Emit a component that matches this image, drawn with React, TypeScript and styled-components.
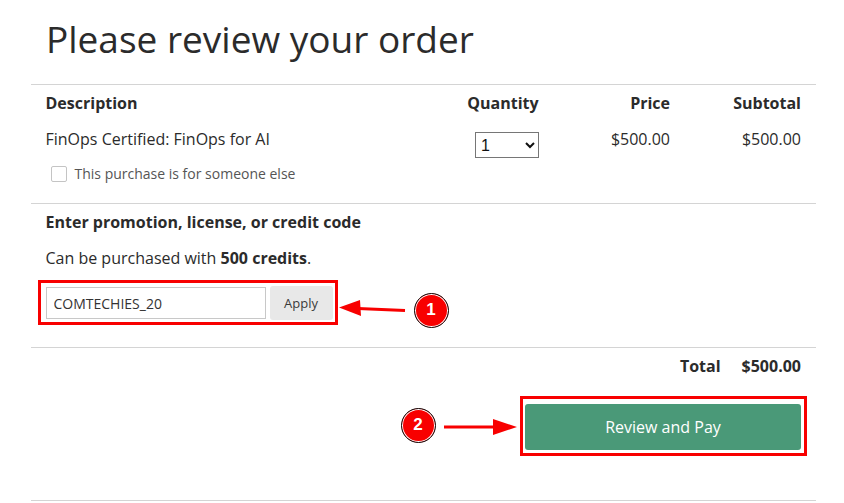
import styled, {createGlobalStyle} from "styled-components";

const GlobalStyle = createGlobalStyle`
  html, body {
    margin: 0;
    padding: 0;
    background: #fff;
  }
  body {
    font-family: "Open Sans", "Liberation Sans", sans-serif;
    color: #2b2b2b;
    overflow: hidden;
  }
`

const Page = styled.div`
  position: relative;
  width: 844px;
  height: 503px;
  padding: 0 28px 0 31px;
  box-sizing: border-box;
  overflow: hidden;
`

const Title = styled.h1`
  margin: 0;
  padding: 15px 0 0 15px;
  height: 84px;
  box-sizing: border-box;
  font-size: 37px;
  line-height: 48px;
  font-weight: 400;
  color: #2b2b2b;
`

const Section = styled.section<{ height: number }>`
  height: ${props => props.height}px;
  box-sizing: border-box;
  border-top: 1px solid #d4d4d4;
  padding: 0 15px 0 14.5px;
`

const GridRow = styled.div`
  display: grid;
  grid-template-columns: 400.5px 114px 1fr 131px;
  font-size: 16px;
`

const HeadRow = styled(GridRow)`
  padding-top: 6px;
  height: 35px;
  line-height: 24px;
  font-weight: 700;
`

const Cell = styled.div<{ align?: string }>`
  text-align: ${props => props.align || "left"};
`

const ItemCell = styled(Cell)`
  line-height: 24px;
  padding-top: 1px;
`

const QtySelect = styled.select`
  display: block;
  margin: 6px 0 0 29px;
  width: 64px;
  height: 26px;
  padding: 0 0 0 1px;
  border: 1px solid #767676;
  border-radius: 0;
  background-color: #fff;
  font-family: "Liberation Sans", sans-serif;
  font-size: 16px;
  color: #111;
`

const CheckLine = styled.label`
  display: flex;
  align-items: center;
  gap: 7.5px;
  margin: 12px 0 0 5.5px;
  font-size: 14px;
  line-height: 22px;
  color: #555;
`

const CheckBox = styled.span`
  width: 16px;
  height: 16px;
  box-sizing: border-box;
  border: 1px solid #c4c4c4;
  border-radius: 2px;
  background: #fff;
`

const CodeHeading = styled.div`
  padding-top: 6px;
  font-size: 16px;
  line-height: 24px;
  font-weight: 700;
`

const CreditNote = styled.p`
  margin: 12px 0 0;
  font-size: 16px;
  line-height: 24px;

  strong {
    font-weight: 700;
  }
`

const CodeForm = styled.div`
  display: flex;
  align-items: center;
  gap: 4px;
  margin-top: 16px;
`

const CodeInput = styled.input`
  width: 220px;
  height: 32px;
  box-sizing: border-box;
  padding: 0 7px;
  border: 1px solid #c8c8c8;
  border-radius: 0;
  outline: none;
  font-family: inherit;
  font-size: 14px;
  color: #333;
`

const ApplyButton = styled.button`
  width: 63px;
  height: 34px;
  padding: 0;
  border: 0;
  border-radius: 3px;
  background: #e8e8e8;
  font-family: inherit;
  font-size: 13px;
  color: #3a3a3a;
`

const TotalRow = styled.div`
  display: flex;
  justify-content: flex-end;
  gap: 21px;
  padding-top: 6px;
  font-size: 16px;
  line-height: 24px;
  font-weight: 700;
`

const PayRow = styled.div`
  display: flex;
  justify-content: flex-end;
  margin-top: 26px;
`

const PayButton = styled.button`
  width: 276px;
  height: 46px;
  padding: 0;
  border: 0;
  border-radius: 3px;
  background: #4a9978;
  font-family: inherit;
  font-size: 16px;
  color: #fff;
`

const BottomRule = styled.div`
  border-top: 1px solid #d4d4d4;
  margin-top: -1px;
`

const Highlight = styled.div<{ x: number; y: number; w: number; h: number }>`
  position: absolute;
  left: ${props => props.x}px;
  top: ${props => props.y}px;
  width: ${props => props.w}px;
  height: ${props => props.h}px;
  box-sizing: border-box;
  border: 3px solid #f80000;
  pointer-events: none;
`

const Badge = styled.div<{ x: number; y: number }>`
  position: absolute;
  left: ${props => props.x}px;
  top: ${props => props.y}px;
  width: 35px;
  height: 35px;
  box-sizing: border-box;
  display: flex;
  align-items: center;
  justify-content: center;
  border-radius: 50%;
  background: #f80000;
  border: 1px solid #111;
  box-shadow: inset 0 0 0 1px #fff;
  font-family: "Liberation Sans", sans-serif;
  font-size: 17px;
  font-weight: 700;
  color: #fff;
`

const ArrowLayer = styled.svg`
  position: absolute;
  left: 0;
  top: 0;
  pointer-events: none;
`

export default function App() {
  return (
    <Page>
      <GlobalStyle/>
      <Title>Please review your order</Title>
      <Section height={119}>
        <HeadRow>
          <Cell>Description</Cell>
          <Cell align="center">Quantity</Cell>
          <Cell align="right">Price</Cell>
          <Cell align="right">Subtotal</Cell>
        </HeadRow>
        <GridRow>
          <ItemCell>
            FinOps Certified: FinOps for AI
            <CheckLine>
              <CheckBox/>
              This purchase is for someone else
            </CheckLine>
          </ItemCell>
          <Cell>
            <QtySelect defaultValue="1">
              <option value="1">1</option>
              <option value="2">2</option>
            </QtySelect>
          </Cell>
          <ItemCell align="right">$500.00</ItemCell>
          <ItemCell align="right">$500.00</ItemCell>
        </GridRow>
      </Section>
      <Section height={144}>
        <CodeHeading>Enter promotion, license, or credit code</CodeHeading>
        <CreditNote>Can be purchased with <strong>500 credits</strong>.</CreditNote>
        <CodeForm>
          <CodeInput defaultValue="COMTECHIES_20"/>
          <ApplyButton>Apply</ApplyButton>
        </CodeForm>
      </Section>
      <Section height={154}>
        <TotalRow>
          <span>Total</span>
          <span>$500.00</span>
        </TotalRow>
        <PayRow>
          <PayButton>Review and Pay</PayButton>
        </PayRow>
      </Section>
      <BottomRule/>

      <Highlight x={38} y={280} w={300} h={45}/>
      <Highlight x={520} y={396} w={287} h={60}/>
      <ArrowLayer width="844" height="503" viewBox="0 0 844 503">
        <path d="M405 310.5 L358 308.5" stroke="#f80000" strokeWidth="3" fill="none"/>
        <path d="M339 307.5 L360 300 L361 316 Z" fill="#f80000"/>
        <path d="M444 427 L500 427" stroke="#f80000" strokeWidth="3" fill="none"/>
        <path d="M517 427 L493 419 L493 435 Z" fill="#f80000"/>
      </ArrowLayer>
      <Badge x={413.5} y={292.5}>1</Badge>
      <Badge x={400.5} y={407.5}>2</Badge>
    </Page>
  )
}
